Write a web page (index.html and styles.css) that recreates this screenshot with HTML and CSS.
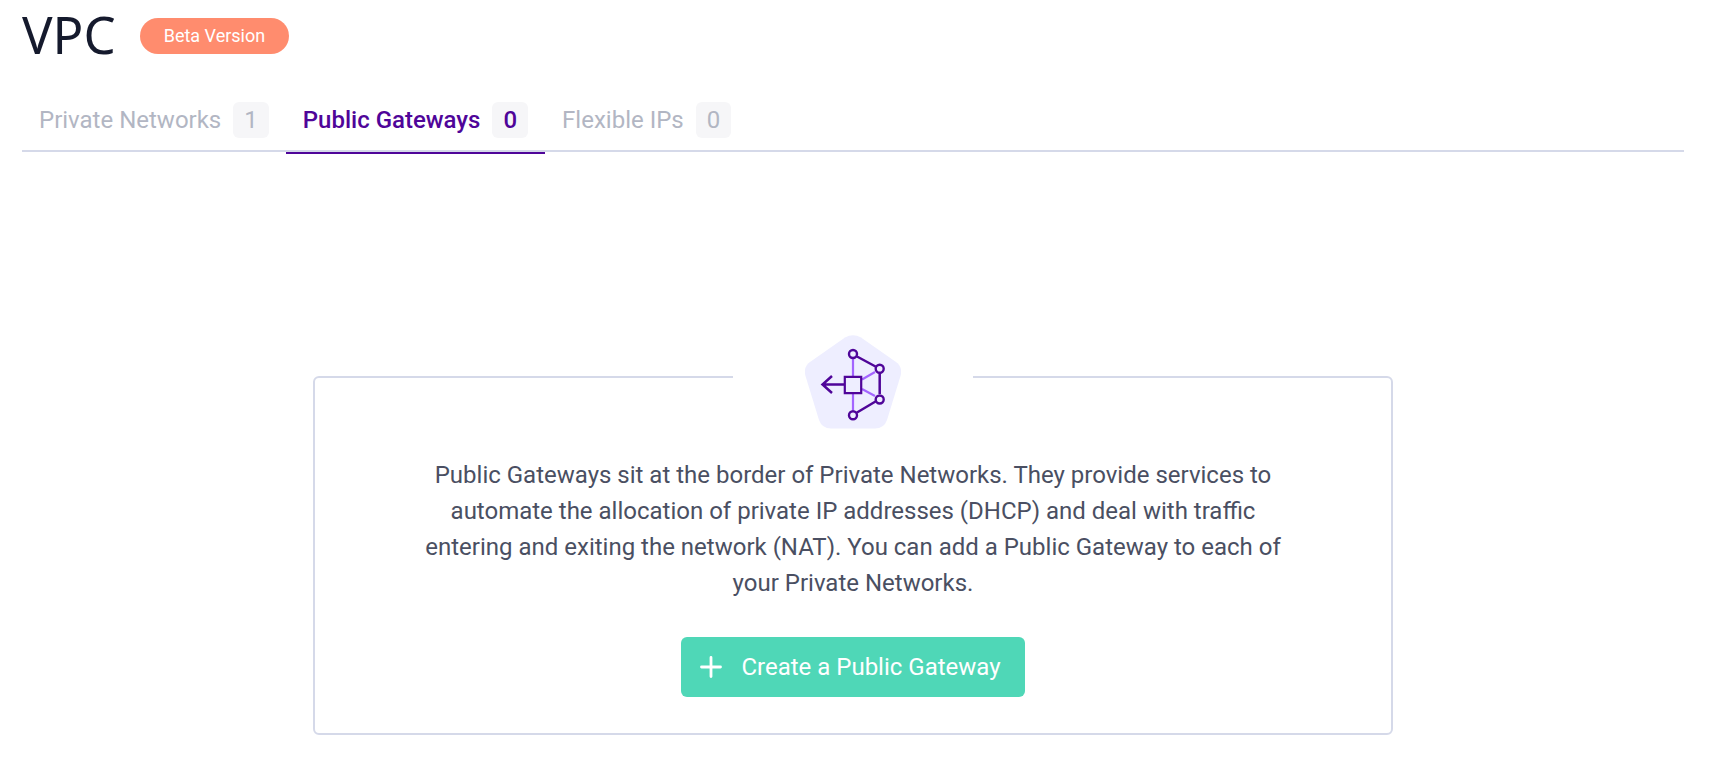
FILE: index.html
```html
<!DOCTYPE html>
<html lang="en">
<head>
<meta charset="utf-8">
<meta name="viewport" content="width=device-width, initial-scale=1">
<title>VPC</title>
<link rel="stylesheet" href="styles.css">
</head>
<body>
<main class="page">
  <header class="page-header">
    <h1 class="page-title">VPC</h1>
    <span class="pill">Beta Version</span>
  </header>
  <nav class="tabs" aria-label="VPC sections">
    <a class="tab" href="#private-networks">Private Networks <span class="count">1</span></a>
    <a class="tab tab-active" href="#public-gateways" aria-current="page">Public Gateways <span class="count">0</span></a>
    <a class="tab" href="#flexible-ips">Flexible IPs <span class="count">0</span></a>
  </nav>
  <section class="empty-card">
    <div class="emblem">
      <svg width="96" height="94" viewBox="0 0 96 94" fill="none" aria-hidden="true">
        <path d="M40 2.6Q48 -2 56 2.6L91 27Q98 32 95.5 41L82 85Q79 93.500 70 93.500H26Q17 93.500 14 85L.5 41Q-2 32 5 27Z" fill="#eeeeff"/>
        <path d="M48 24V43M48 58V75M57 44.500L70 37M57 54L70 61" stroke="#a365ff" stroke-width="2.200"/>
        <path d="M52 21.500L70.500 31.500M74.700 38V59M70.500 66.500L52 77.500M39 49.500H18M27 41L17.500 49.500L27 58" stroke="#4f0599" stroke-width="2.500"/>
        <path d="M39.800 41.800H56.200V58.200H39.800Z" fill="#eeeeff" stroke="#4f0599" stroke-width="2.200"/>
        <g fill="#eeeeff" stroke="#4f0599" stroke-width="2.400">
          <circle cx="48" cy="19" r="4"/><circle cx="74.700" cy="33.700" r="4"/>
          <circle cx="74.700" cy="64.500" r="4"/><circle cx="48" cy="80.300" r="4"/>
        </g>
      </svg>
    </div>
    <p class="description">Public Gateways sit at the border of Private Networks. They provide services to automate the allocation of private IP addresses (DHCP) and deal with traffic entering and exiting the network (NAT). You can add a Public Gateway to each of your Private Networks.</p>
    <button class="create-button" type="button">
      <svg width="22" height="22" viewBox="0 0 22 22" fill="none" stroke="currentColor" stroke-width="2.800" stroke-linecap="round" aria-hidden="true"><path d="M11 1.500V20.500M1.500 11H20.500"/></svg>
      Create a Public Gateway
    </button>
  </section>
</main>
</body>
</html>
```
FILE: styles.css
```css
* {
  box-sizing: border-box;
}

body {
  margin: 0;
  background: #fff;
  color: #4a4f62;
  font-family: Roboto, "Noto Sans", sans-serif;
}

.page {
  padding: 0 26px 32px 22px;
}

.page-header {
  display: flex;
  align-items: center;
  gap: 24px;
  height: 72px;
}

.page-title {
  margin: 0;
  padding-bottom: 4px;
  color: #151a2d;
  font-family: "Noto Sans", sans-serif;
  font-size: 51px;
  font-weight: 400;
  line-height: 68px;
}

.pill {
  padding: 0 24px;
  border-radius: 18px;
  background: #ff8c6e;
  color: #fff;
  font-size: 18px;
  line-height: 36px;
}

.tabs {
  display: flex;
  margin-top: 16px;
  border-bottom: 2px solid #d5d9e9;
}

.tab {
  display: flex;
  align-items: center;
  gap: 12px;
  height: 66px;
  margin-bottom: -4px;
  padding: 0 17px;
  border-bottom: 2px solid transparent;
  color: #b2b6c3;
  font-size: 24px;
  font-weight: 400;
  line-height: 36px;
  text-decoration: none;
}

.tab-active {
  border-bottom-color: #4f0599;
  color: #4f0599;
  font-weight: 500;
}

.count {
  padding: 0 11px;
  border-radius: 6px;
  background: #f6f6f8;
}

.empty-card {
  display: flex;
  flex-direction: column;
  align-items: center;
  max-width: 1080px;
  margin: 224px auto 0;
  padding: 0 24px 36px;
  border: 2px solid #d5d9e9;
  border-radius: 6px;
}

.emblem {
  display: flex;
  justify-content: center;
  width: 240px;
  max-width: 100%;
  margin-top: -43px;
  background: #fff;
}

.description {
  max-width: 864px;
  margin: 28px 0 36px;
  font-size: 24px;
  line-height: 36px;
  text-align: center;
}

.create-button {
  display: flex;
  align-items: center;
  gap: 19px;
  padding: 12px 24px 12px 19px;
  border: 0;
  border-radius: 6px;
  background: #4fd7b7;
  color: #fff;
  font: inherit;
  font-size: 24px;
  font-weight: 400;
  line-height: 36px;
}
```
